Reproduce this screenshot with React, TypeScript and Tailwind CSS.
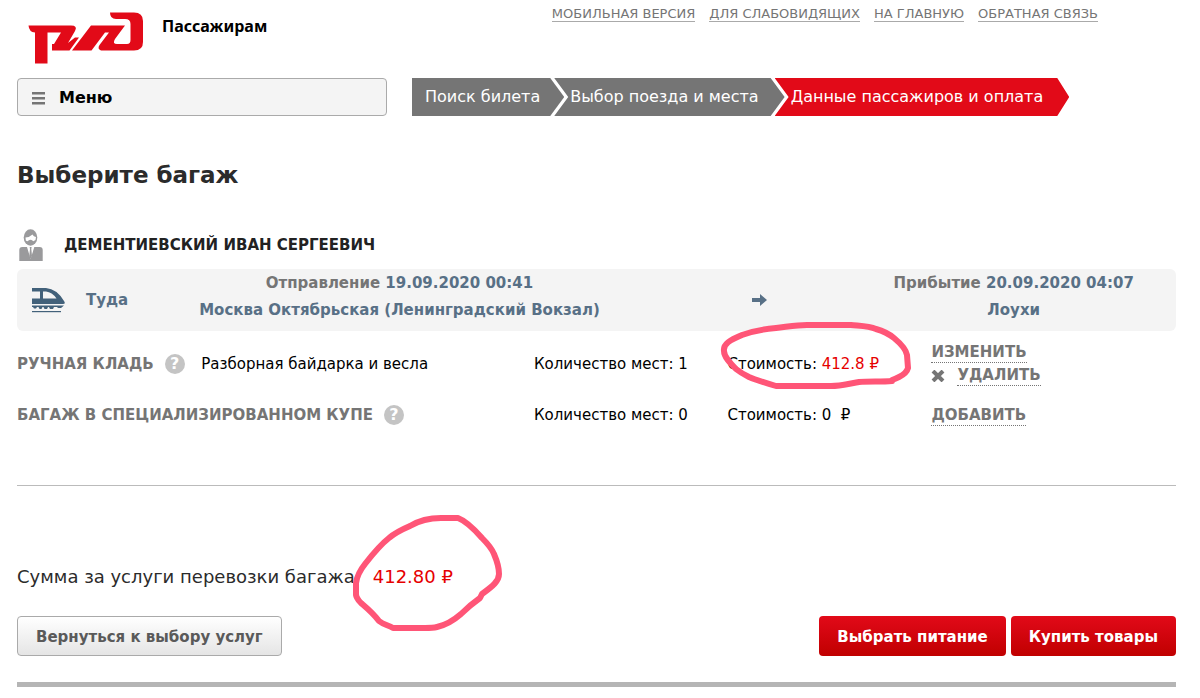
import React from "react";

type Step = { label: string; className: string };

const steps: Step[] = [
  {
    label: "Поиск билета",
    className:
      "bg-[#757575] pl-[13px] pr-6 [clip-path:polygon(0_0,calc(100%-14px)_0,100%_50%,calc(100%-14px)_100%,0_100%)]",
  },
  {
    label: "Выбор поезда и места",
    className:
      "-ml-2.5 bg-[#757575] pl-4 pr-[26px] [clip-path:polygon(0_0,calc(100%-14px)_0,100%_50%,calc(100%-14px)_100%,0_100%,14px_50%)]",
  },
  {
    label: "Данные пассажиров и оплата",
    className:
      "-ml-2.5 bg-[#e20a18] pl-4 pr-[26px] [clip-path:polygon(0_0,calc(100%-12px)_0,100%_50%,calc(100%-12px)_100%,0_100%,14px_50%)]",
  },
];

const links = ["МОБИЛЬНАЯ ВЕРСИЯ", "ДЛЯ СЛАБОВИДЯЩИХ", "НА ГЛАВНУЮ", "ОБРАТНАЯ СВЯЗЬ"];

function Logo() {
  return (
    <svg viewBox="0 0 116 52" className="h-[52px] w-[116px]" fill="#e20a18" role="img" aria-label="РЖД">
      <path d="M.5 13.500H43Q50 13.500 47 19L40 31L47 25.500H51L41.500 38.500H24V32H26L33 20.500H19.500V51.500H7V20.500Q1 20 .5 13.500Z" />
      <path d="M63 13.500H97L87 27Q84 32 89 32H99Q102.500 32 102.500 28V12Q102.500 7 97 7H88Q82 7 82 .5H106Q115 .5 115 9V30Q115 38.500 106 38.500H73Q69 37 71.500 33L81 20.500H77L63.500 38.500H44Z" />
    </svg>
  );
}

function PassengerIcon() {
  return (
    <svg viewBox="0 0 24 32" className="h-8 w-6" aria-hidden="true">
      <ellipse cx="11.500" cy="8.500" rx="6.800" ry="8.300" fill="#9a9a9c" />
      <path d="M6.500 8.500Q11 8 13.500 5.500Q14.500 7.500 17 8L16.500 11Q14 13 13.500 11.500Q11.500 10 9.500 11.500Q8.500 13 6.800 11.500Z" fill="#fff" />
      <path d="M.3 32V21Q.3 18 3.300 18H8L11.600 30L15.300 18H20.700Q23.700 18 23.700 21V32Z" fill="#9a9a9c" />
      <path d="M9 18H14.500L12 28H11.300Z" fill="#fff" />
      <path d="M10.700 18H12.600L12.300 20L13 27L11.600 30L10.300 27L11 20Z" fill="#9a9a9c" />
    </svg>
  );
}

function TrainIcon() {
  return (
    <svg viewBox="0 0 34 26" className="h-[26px] w-[34px]" fill="#42617a" aria-hidden="true">
      <path d="M0 1H14Q25 2 32 14Q34 17 31 17H0V11.500H8V4.500H0Z" />
      <path d="M11 4.500V11.500H24.500Q20 5 14 4.500Z" fill="#f4f4f4" />
      <path d="M0 18.500H32L29 21H26L25 20H22L21 22H18L17 20H16L15 22H12.500L11.500 20H10.500L9.500 22H7.500L6.500 20H5L4 21.500H2L1 20H0Z" />
      <path d="M0 24H29V25.200H0Z" />
    </svg>
  );
}

function Help({ about }: { about: string }) {
  return (
    <button
      type="button"
      aria-label={about}
      className="ml-[11px] h-5 w-5 rounded-full bg-[#c4c4c4] text-center text-base leading-5 font-bold text-white"
    >
      ?
    </button>
  );
}

const actionClass = "border-b border-dotted border-[#757575] leading-5 font-bold text-[#757575]";

export default function App() {
  return (
    <div className="min-h-screen bg-white pr-6 pl-[17px] font-['DejaVu_Sans',sans-serif] text-base text-black">
      <header>
        <div className="flex h-[78px] items-start justify-between">
          <div className="flex items-start pt-3 pl-[11px]">
            <Logo />
            <span className="ml-[18px] pt-0.5 font-['Noto_Sans',sans-serif] text-base leading-6 font-bold">Пассажирам</span>
          </div>
          <nav className="mr-[78px] flex gap-3.5 pt-[7px] text-[13px] leading-[14px] text-[#757575]">
            {links.map((l) => (
              <a key={l} href="#" className="border-b border-[#aaa]">
                {l}
              </a>
            ))}
          </nav>
        </div>
        <div className="flex gap-[25px]">
          <button
            type="button"
            className="flex h-[38px] w-[370px] items-center gap-3.5 rounded border border-[#aaa] bg-[#f4f4f4] px-3.5 pt-0.5 font-bold"
          >
            <svg viewBox="0 0 13 13" className="h-[13px] w-[13px]" fill="#757575" aria-hidden="true">
              <path d="M0 0H13V2.500H0ZM0 5H13V7.500H0ZM0 10H13V12.500H0Z" />
            </svg>
            Меню
          </button>
          <ol className="flex h-[38px] text-base leading-[38px] whitespace-nowrap text-white">
            {steps.map((s) => (
              <li key={s.label} className={s.className}>
                {s.label}
              </li>
            ))}
          </ol>
        </div>
      </header>

      <main>
        <h1 className="mt-11 text-[23px] leading-[30px] font-bold text-[#2b2b2b]">Выберите багаж</h1>

        <div className="mt-[39px] flex h-8 items-center gap-[21px] pl-0.5">
          <PassengerIcon />
          <h2 className="text-[15px] leading-5 font-bold text-[#222]">ДЕМЕНТИЕВСКИЙ ИВАН СЕРГЕЕВИЧ</h2>
        </div>

        <section className="mt-2 flex h-[62px] items-center rounded-md bg-[#f4f4f4] text-[15px] leading-[27px] font-bold text-[#587086]">
          <div className="flex w-[14%] items-center gap-5 pl-[15px]">
            <TrainIcon />
            <span>Туда</span>
          </div>
          <div className="w-[38%] pb-1.5 text-center">
            <p>
              <span className="text-[#757575]">Отправление</span> 19.09.2020 00:41
            </p>
            <p>Москва Октябрьская (Ленинградский Вокзал)</p>
          </div>
          <div className="flex w-[20%] justify-center pl-12">
            <svg viewBox="0 0 15 12" className="h-3 w-[15px]" fill="#587086" aria-hidden="true">
              <path d="M0 4H8V0L15 6L8 12V8H0Z" />
            </svg>
          </div>
          <div className="w-[28%] pb-1.5 text-center">
            <p>
              <span className="text-[#757575]">Прибытие</span> 20.09.2020 04:07
            </p>
            <p>Лоухи</p>
          </div>
        </section>

        <table className="mt-2 w-full table-fixed text-left text-[15px]">
          <colgroup>
            <col className="w-[15.9%]" />
            <col className="w-[28.7%]" />
            <col className="w-[16.7%]" />
            <col className="w-[17.6%]" />
            <col />
          </colgroup>
          <tbody>
            <tr className="h-[50px] whitespace-nowrap">
              <th scope="row" className="font-bold text-[#757575]">
                <span className="flex items-center">
                  РУЧНАЯ КЛАДЬ
                  <Help about="О ручной клади" />
                </span>
              </th>
              <td>Разборная байдарка и весла</td>
              <td>Количество мест: 1</td>
              <td className="relative">
                Стоимость: <span className="text-[#e60000]">412.8 ₽</span>
                <svg
                  viewBox="720 320 192 70"
                  className="pointer-events-none absolute -top-[18px] -left-2 h-[70px] w-[192px]"
                  fill="none"
                  stroke="#ff5577"
                  strokeWidth="6"
                  strokeLinejoin="round"
                  strokeLinecap="round"
                  aria-hidden="true"
                >
                  <path d="M893 380C882 381 870 380 860 381C848 383 842 385 832 385H777C767 382 757 379 750 376C742 372 737 368 737 368C731 362 725 356 725 350C724 343 731 339 743 334C754 330 766 328 777 327C787 326 797 324 808 324H852C862 325 870 325 877 328C884 330 890 333 895 337C901 342 907 348 908 354L909 367C908 371 904 374 900 376Q896 378 893 379" />
                </svg>
              </td>
              <td>
                <div className="flex flex-col items-start gap-0.5">
                  <button type="button" className={actionClass}>ИЗМЕНИТЬ</button>
                  <div className="flex items-center gap-3">
                    <svg viewBox="0 0 14 12" className="h-3 w-3.5" stroke="#757575" strokeWidth="4" aria-hidden="true">
                      <path d="M2 1L12 11M12 1L2 11" />
                    </svg>
                    <button type="button" className={actionClass}>УДАЛИТЬ</button>
                  </div>
                </div>
              </td>
            </tr>
            <tr className="h-[52px] whitespace-nowrap">
              <th scope="row" colSpan={2} className="font-bold text-[#757575]">
                <span className="flex items-center">
                  БАГАЖ В СПЕЦИАЛИЗИРОВАННОМ КУПЕ
                  <Help about="О багаже в специализированном купе" />
                </span>
              </th>
              <td>Количество мест: 0</td>
              <td>Стоимость: 0&nbsp; ₽</td>
              <td>
                <button type="button" className={actionClass}>ДОБАВИТЬ</button>
              </td>
            </tr>
          </tbody>
        </table>

        <hr className="mt-11 border-[#bbb]" />

        <p className="mt-[78px] text-lg leading-[26px] text-[#2b2b2b]">
          Сумма за услуги перевозки багажа
          <span className="relative ml-[18px] inline-block text-[#e60000]">
            412.80 ₽
            <svg
              viewBox="350 512 155 120"
              className="pointer-events-none absolute -top-[51px] -left-[23px] h-[120px] w-[155px] max-w-none"
              fill="none"
              stroke="#ff5577"
              strokeWidth="6"
              strokeLinejoin="round"
              strokeLinecap="round"
              aria-hidden="true"
            >
              <path d="M356 594V582C357 575 361 568 365 563C372 554 380 544 389 537C396 531 403 528 410 525C420 519 430 517 441 517H458C466 520 475 529 482 537C488 543 492 548 494 553C497 560 499 566 499 573C499 580 493 585 482 593L480 597C473 602 467 607 461 613C453 620 446 624 437 626C433 627 429 627 425 627H393C388 624 384 624 379 620C373 612 368 608 361 602Q356 597 356 593" />
            </svg>
          </span>
        </p>

        <div className="mt-[26px] flex gap-[5px] text-[15px] font-bold">
          <button
            type="button"
            className="mr-auto h-10 rounded border border-[#aaa] bg-linear-to-b from-white to-[#e5e5e5] px-[18px] pt-0.5 text-[#5a5a5a]"
          >
            Вернуться к выбору услуг
          </button>
          <button type="button" className="h-10 rounded bg-linear-to-b from-[#e20a18] to-[#c00000] px-[18px] pt-0.5 text-white">
            Выбрать питание
          </button>
          <button type="button" className="h-10 rounded bg-linear-to-b from-[#e20a18] to-[#c00000] px-[18px] pt-0.5 text-white">
            Купить товары
          </button>
        </div>
        <div className="mt-[26px] h-[5px] bg-[#b5b5b5]" />
      </main>
    </div>
  );
}
